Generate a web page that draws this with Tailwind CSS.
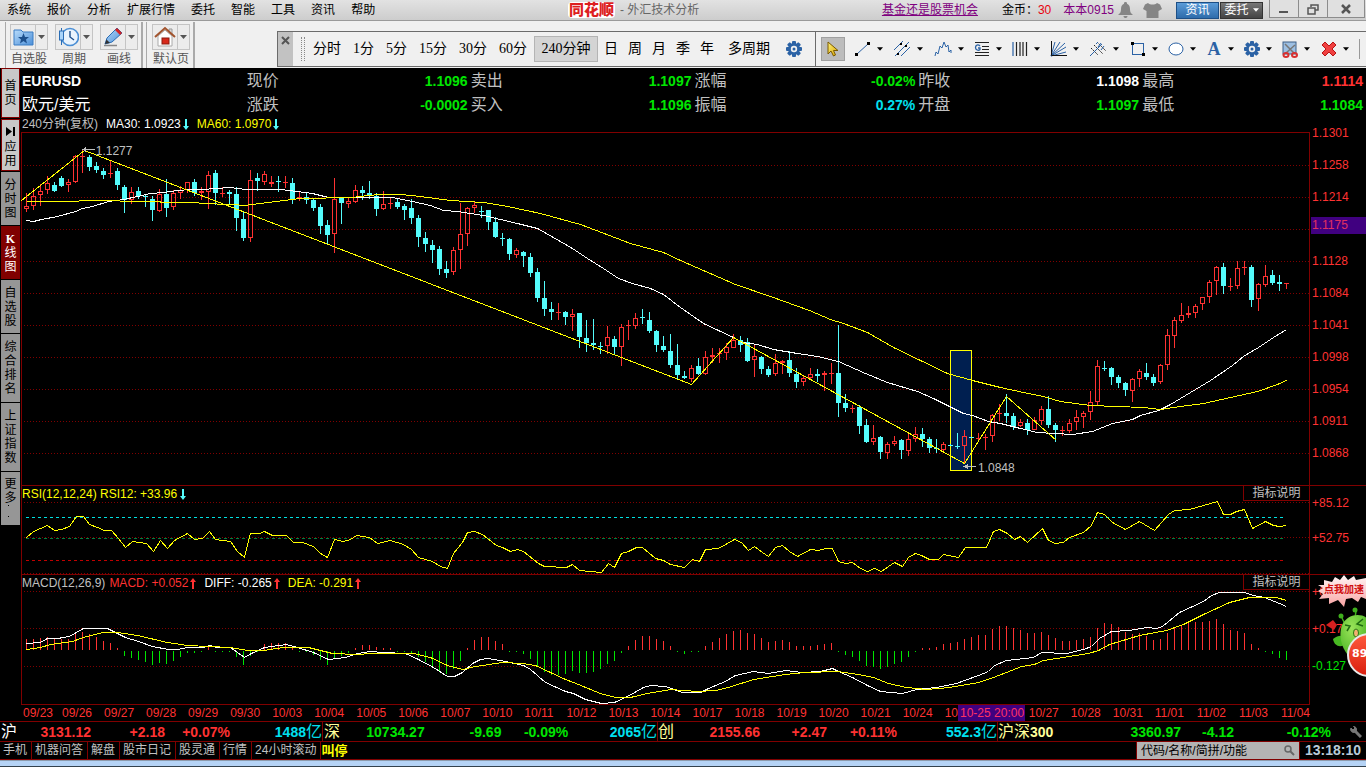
<!DOCTYPE html>
<html lang="zh-CN">
<head>
<meta charset="utf-8">
<title>同花顺 - 外汇技术分析</title>
<script src="https://cdn.jsdelivr.net/npm/@tailwindcss/browser@4"></script>
</head>
<body class="bg-black font-['Liberation_Sans','Noto_Sans_CJK_SC',sans-serif] text-xs">
<svg class="absolute h-0 w-0">
  <defs>
    <linearGradient id="blueFill" x1="0" y1="0" x2="1" y2="1"><stop offset="0" stop-color="#b9dcfb"/><stop offset="1" stop-color="#4b8fd8"/></linearGradient>
    <linearGradient id="gold" x1="0" y1="0" x2="1" y2="1"><stop offset="0" stop-color="#fff27a"/><stop offset="1" stop-color="#d9a400"/></linearGradient>
    <linearGradient id="pink" x1="0" y1="0" x2="0" y2="1"><stop offset="0" stop-color="#fff6f6"/><stop offset="1" stop-color="#f9a3a3"/></linearGradient>
    <radialGradient id="alien" cx=".4" cy=".3" r=".8"><stop offset="0" stop-color="#9be45a"/><stop offset="1" stop-color="#3fae1c"/></radialGradient>
    <linearGradient id="ball" x1="0" y1="0" x2="0" y2="1"><stop offset="0" stop-color="#ff5a3c"/><stop offset="1" stop-color="#d81e0e"/></linearGradient>
    <symbol id="caret" viewBox="0 0 7 4"><path d="M0 0H7L3.500 4Z" fill="currentColor"/></symbol>
    <symbol id="gear" viewBox="0 0 16 16"><g fill="#2b62a5"><rect x="6" y="0" width="4" height="16" rx="1"/><rect x="6" y="0" width="4" height="16" rx="1" transform="rotate(45 8 8)"/><rect x="6" y="0" width="4" height="16" rx="1" transform="rotate(90 8 8)"/><rect x="6" y="0" width="4" height="16" rx="1" transform="rotate(135 8 8)"/><circle cx="8" cy="8" r="6"/></g><circle cx="8" cy="8" r="3.200" fill="#f0f0f0"/><circle cx="8" cy="8" r="1.500" fill="#2b62a5"/></symbol>
    <symbol id="down" viewBox="0 0 6 11"><path d="M2 0H4V7H6L3 11L0 7H2Z" fill="#54fcfc"/></symbol>
    <symbol id="up" viewBox="0 0 6 11"><path d="M2 11H4V4H6L3 0L0 4H2Z" fill="#ff3232"/></symbol>
  </defs>
</svg>

<div class="flex min-h-screen flex-col overflow-hidden">
  <header class="flex h-[21px] items-center border-b border-[#9a9a9a] bg-linear-to-b from-[#e2e2e2] to-[#cdcdcd] text-black">
    <nav class="flex flex-1 gap-4 pl-[7px] whitespace-nowrap">
      <button>系统</button><button>报价</button><button>分析</button><button>扩展行情</button><button>委托</button><button>智能</button><button>工具</button><button>资讯</button><button>帮助</button>
    </nav>
    <h1 class="flex w-[314px] items-center gap-1 whitespace-nowrap text-[#666]">
      <span class="rounded-sm bg-white px-px text-[15px] leading-4 font-black text-[#dd1f1f]">同花顺</span><span class="ml-px">- 外汇技术分析</span>
    </h1>
    <div class="flex h-full items-center whitespace-nowrap">
      <a href="#" class="text-[#800080] underline">基金还是股票机会</a>
      <span class="ml-6">金币：</span><span class="text-red-600">30</span>
      <a href="#" class="ml-3 text-[#800080]">本本0915</a>
      <button class="ml-1" aria-label="提醒"><svg class="h-4 w-[15px]" viewBox="0 0 15 16" fill="#858585"><path d="M7.500 0a1.500 1.500 0 0 1 1.500 1.700C11.500 2.500 12 5 12 7.500C12 10 13 11.500 15 13H0C2 11.500 3 10 3 7.500C3 5 3.500 2.500 6 1.700A1.500 1.500 0 0 1 7.500 0ZM5.500 14h4c0 2.700-4 2.700-4 0Z"/></svg></button>
      <button class="ml-2.5" aria-label="换肤"><svg class="h-[15px] w-[19px]" viewBox="0 0 19 15" fill="#858585"><path d="M5 0C7 2 12 2 14 0L17 1.500L19 6L15.500 8V15H3.500V8L0 6L2 1.500Z"/></svg></button>
      <button class="ml-3.5 h-[17px] w-[43px] border border-[#1d4f86] bg-linear-to-b from-[#5a9bd8] to-[#2e6cab] leading-[15px] text-white">资讯</button>
      <button class="ml-px flex h-[17px] w-[43px] items-center justify-center gap-1 border border-[#333] bg-linear-to-b from-[#777] to-[#444] leading-[15px] text-white">委托<svg class="h-1 w-[6px]"><use href="#caret"/></svg></button>
      <div class="mr-px ml-1.5 flex h-[18px] self-start border border-t-0 border-[#8c8c8c] bg-[#e0e0e0] text-[#555]">
        <button class="w-[29px] border-r border-[#8c8c8c]" aria-label="最小化"><svg class="mx-auto h-3 w-[10px]"><rect y="8" width="9" height="2" fill="currentColor"/></svg></button>
        <button class="w-[29px] border-r border-[#8c8c8c]" aria-label="还原"><svg class="mx-auto h-3 w-3" viewBox="0 0 12 12" fill="none" stroke="currentColor" stroke-width="1.500"><path d="M4 4V2H11V7H8M1 5H8V11H1Z"/></svg></button>
        <button class="w-[36px]" aria-label="关闭"><svg class="mx-auto h-[10px] w-[10px]" viewBox="0 0 10 10" stroke="currentColor" stroke-width="2.500"><path d="M1 1L9 9M9 1L1 9"/></svg></button>
      </div>
    </div>
  </header>

  <div class="flex h-[47px] bg-[#f0f0f0] text-[#555]">
    <div class="flex shrink-0 pt-px">
      <div class="flex gap-[7px] border-r-2 border-[#aaa] pr-[3px]">
        <div class="ml-1 w-[2px] border-r border-[#aaa]"></div>
        <div class="-ml-[3px] text-center">
          <div class="mt-[2px] mb-px flex h-[26px] w-[38px] border border-[#c4c4c4] bg-[#ececec]">
            <button class="w-[25px] border-r border-[#c4c4c4] pl-0.5" aria-label="自选股"><svg class="h-5 w-[21px]" viewBox="0 0 21 20"><path d="M1 3H8L10 5H20V18H1Z" fill="url(#blueFill)" stroke="#3b7cc4"/><path d="M10.500 6L12 10H16L13 12.500L14 16.500L10.500 14L7 16.500L8 12.500L5 10H9Z" fill="#1c4f8c"/></svg></button>
            <button class="flex flex-1 items-center justify-center" aria-label="更多自选"><svg class="h-1 w-[7px]"><use href="#caret"/></svg></button>
          </div>自选股
        </div>
        <div class="text-center">
          <div class="mt-[2px] mb-px flex h-[26px] w-[38px] border border-[#c4c4c4] bg-[#ececec]">
            <button class="w-[25px] border-r border-[#c4c4c4] pl-0.5" aria-label="周期"><svg class="h-5 w-[21px]" viewBox="0 0 21 20"><circle cx="12" cy="10" r="8.500" fill="#e9f3fd" stroke="#4a8ed4" stroke-width="1.600"/><path d="M12 4V10L16 13" fill="none" stroke="#1c4f8c" stroke-width="1.400"/><path d="M3.500 1V18" stroke="#2a6db5"/><rect x="1.500" y="4" width="4" height="9" fill="#a9d4fa" stroke="#2a6db5"/></svg></button>
            <button class="flex flex-1 items-center justify-center" aria-label="选择周期"><svg class="h-1 w-[7px]"><use href="#caret"/></svg></button>
          </div>周期
        </div>
        <div class="text-center">
          <div class="mt-[2px] mb-px flex h-[26px] w-[38px] border border-[#c4c4c4] bg-[#ececec]">
            <button class="w-[25px] border-r border-[#c4c4c4] pl-0.5" aria-label="画线"><svg class="h-5 w-[21px]" viewBox="0 0 21 20"><path d="M1 18.500H14" stroke="#888" stroke-width="1.500"/><path d="M2 17L4 11L14 1L19 6L9 15Z" fill="url(#blueFill)" stroke="#2a6db5"/><path d="M14 1L19 6L17 8L12 3Z" fill="#d42222"/><path d="M2 17L3.500 12.500L7 16Z" fill="#333"/></svg></button>
            <button class="flex flex-1 items-center justify-center" aria-label="画线工具"><svg class="h-1 w-[7px]"><use href="#caret"/></svg></button>
          </div>画线
        </div>
      </div>
      <div class="flex border-r-2 border-[#aaa] pr-[3px]">
        <div class="mr-[5px] w-1 border-r border-[#aaa]"></div>
        <div class="text-center">
          <div class="mt-[2px] mb-px flex h-[26px] w-[38px] border border-[#c4c4c4] bg-[#ececec]">
            <button class="w-[25px] border-r border-[#c4c4c4] pl-px" aria-label="默认页"><svg class="h-[22px] w-[22px]" viewBox="0 0 22 22"><path d="M15 3H18V8H15Z" fill="#ddd" stroke="#999"/><path d="M4 10L11 4L18 10V20H4Z" fill="#fff" stroke="#aaa"/><path d="M1 11L11 2L21 11" fill="none" stroke="#a2542e" stroke-width="2"/><rect x="8" y="12" width="7" height="6" fill="#d8281a" stroke="#8a1c10"/></svg></button>
            <button class="flex flex-1 items-center justify-center" aria-label="选择默认页"><svg class="h-1 w-[7px]"><use href="#caret"/></svg></button>
          </div>默认页
        </div>
      </div>
    </div>
    <div class="mt-[10px] mb-px ml-[82px] flex min-w-0 flex-1 border border-r-0 border-[#6b6b6b] text-sm whitespace-nowrap text-black">
      <button class="flex w-[15px] shrink-0 justify-center bg-[#c2c2c2] pt-1" aria-label="关闭工具栏"><svg class="h-[9px] w-[9px]" viewBox="0 0 9 9" stroke="#555" stroke-width="2"><path d="M1 1L8 8M8 1L1 8"/></svg></button>
      <div class="my-[5px] ml-2 w-[4px] shrink-0 border-x border-dotted border-[#888]"></div>
      <div class="flex w-[510px] shrink-0 items-center pl-2 font-['Liberation_Serif','Noto_Sans_CJK_SC',serif]">
        <div class="flex gap-3"><button>分时</button><button>1分</button><button>5分</button><button>15分</button><button>30分</button><button>60分</button></div>
        <button class="mr-1.5 ml-[7px] h-[26px] w-16 border border-[#b4b4b4] bg-[#d4d4d4]">240分钟</button>
        <div class="flex gap-2.5"><button>日</button><button>周</button><button>月</button><button>季</button><button>年</button></div>
        <button class="ml-3.5">多周期</button>
        <button class="ml-4" aria-label="周期设置"><svg class="h-4 w-4"><use href="#gear"/></svg></button>
      </div>
      <div class="flex flex-1 items-center justify-between border-l border-[#6b6b6b] pr-1.5 pl-[5px]">
        <button class="flex h-6 w-6 items-center justify-center border border-[#a0a0a0] bg-[#bcbcbc]" aria-label="选择"><svg class="h-4 w-3" viewBox="0 0 12 16"><path d="M1 1V13L4 10L6.500 15L8.500 14L6.500 9.500H11Z" fill="url(#gold)" stroke="#7a5a00"/></svg></button>
        <button class="flex items-center gap-1.5" aria-label="线段"><svg class="h-4 w-4" viewBox="0 0 16 16"><path d="M2 13L13 3" stroke="#2b62a5"/><path d="M0 12H3V15H0ZM12 1H15V4H12Z"/></svg><svg class="h-1 w-[6px]"><use href="#caret"/></svg></button>
        <button class="flex items-center gap-1.5" aria-label="平行线"><svg class="h-4 w-[18px]" viewBox="0 0 18 16" stroke="#2b62a5"><path d="M1 9L10 0M2 15L16 1M8 15L17 6"/><path d="M4 12h2v2h-2zM7 2h2v2h-2zM12 4h2v2h-2z" fill="#000" stroke="none"/></svg><svg class="h-1 w-[6px]"><use href="#caret"/></svg></button>
        <button class="flex items-center gap-1.5" aria-label="波浪线"><svg class="h-4 w-[18px]" viewBox="0 0 18 16" fill="none" stroke="#2b62a5"><path d="M1 15L2 11L4 13L6 5L8 7L10 1L12 6L14 4L15 11L17 9V12"/></svg><svg class="h-1 w-[6px]"><use href="#caret"/></svg></button>
        <button class="flex items-center gap-1.5" aria-label="黄金分割"><svg class="h-4 w-4" viewBox="0 0 16 16" stroke="#222"><path d="M1 1.500H15M8 5.500H15M8 8.500H15M1 11.500H15M1 14.500H15"/><path d="M6 5C4 3 1.500 4 1.500 6.500S4.500 10 6 8.500V7H4" fill="none" stroke="#2b62a5" stroke-width="1.300"/></svg><svg class="h-1 w-[6px]"><use href="#caret"/></svg></button>
        <button class="flex items-center gap-1.5" aria-label="周期线"><svg class="h-4 w-4" viewBox="0 0 16 16" stroke="#222" stroke-width="1.200"><path d="M1 1V15" stroke="#2b62a5"/><path d="M4.500 1V15M8 1V15M11 1V15M14.500 1V15"/></svg><svg class="h-1 w-[6px]"><use href="#caret"/></svg></button>
        <button class="flex items-center gap-1.5" aria-label="扇形线"><svg class="h-4 w-[17px]" viewBox="0 0 17 16" fill="none" stroke="#2b62a5"><path d="M1 15L5 1M1 15L10 1M1 15L15 2M1 15L16 6M1 15L16 11"/><path d="M1.500 0V14.500H17" stroke="#111"/></svg><svg class="h-1 w-[6px]"><use href="#caret"/></svg></button>
        <button class="flex items-center gap-1.5" aria-label="回归通道"><svg class="h-4 w-[18px]" viewBox="0 0 18 16" fill="none" stroke="#222"><path d="M5 4L14 13M8 1L17 10M2 7L9 14" stroke-dasharray="2 1"/><path d="M1 15L13 3M7 3L9 1M9 6L12 2M12 9L15 5" stroke="#2b62a5"/></svg><svg class="h-1 w-[6px]"><use href="#caret"/></svg></button>
        <button class="flex items-center gap-1.5" aria-label="矩形"><svg class="h-4 w-4" viewBox="0 0 16 16"><rect x="2.500" y="2.500" width="11" height="11" fill="none" stroke="#2b62a5"/><path d="M1 1H4V4H1ZM12 12H15V15H12Z"/></svg><svg class="h-1 w-[6px]"><use href="#caret"/></svg></button>
        <button class="flex items-center gap-1.5" aria-label="椭圆"><svg class="h-4 w-4" viewBox="0 0 16 16"><ellipse cx="8" cy="8" rx="7" ry="6" fill="#fff" stroke="#2b62a5"/></svg><svg class="h-1 w-[6px]"><use href="#caret"/></svg></button>
        <button class="flex items-center gap-1.5" aria-label="文字"><span class="w-4 font-['Liberation_Serif',serif] text-lg font-bold text-[#2b62a5]">A</span><svg class="h-1 w-[6px]"><use href="#caret"/></svg></button>
        <button class="flex items-center gap-1.5" aria-label="设置"><svg class="h-4 w-4"><use href="#gear"/></svg><svg class="h-1 w-[6px]"><use href="#caret"/></svg></button>
        <button class="flex items-center gap-1.5" aria-label="截图"><svg class="h-[17px] w-4" viewBox="0 0 16 17"><rect x="1" y="1" width="13" height="12" fill="#9dbfe2" stroke="#3c5f86"/><path d="M3 3L12 12M13 4L4 12" stroke="#777" stroke-width="1.500"/><g fill="none" stroke="#d83030" stroke-width="2"><ellipse cx="4" cy="14" rx="2.500" ry="2"/><ellipse cx="12.500" cy="14" rx="2.500" ry="2"/></g></svg><svg class="h-1 w-[6px]"><use href="#caret"/></svg></button>
        <button class="flex items-center gap-1.5" aria-label="删除"><svg class="h-4 w-4" viewBox="0 0 16 16"><path d="M4 1L8 5L12 1L15 4L11 8L15 12L12 15L8 11L4 15L1 12L5 8L1 4Z" fill="#f04040" stroke="#b81414"/></svg><svg class="h-1 w-[6px]"><use href="#caret"/></svg></button>
        <div class="h-5 border-r border-[#999]"></div>
      </div>
    </div>
  </div>

  <main class="relative flex flex-1">
    <nav class="flex w-[21px] shrink-0 flex-col gap-px leading-[14px] text-black [&>button]:mr-px [&>button]:ml-px [&>button]:flex [&>button]:w-[19px] [&>button]:flex-col [&>button]:items-center [&>button]:justify-center">
      <button class="h-[50px] border border-[#800000] bg-[#c8c8c8]"><span class="w-3">首页</span></button>
      <button class="h-[52px] border border-[#800000] bg-[#c8c8c8]"><svg class="my-1 h-[9px] w-[9px]" viewBox="0 0 9 9"><path d="M0 0H2V9H0Z" fill="none"/><path d="M0 0L6 4.500L0 9ZM7 0H9V9H7Z"/></svg><span class="w-3">应用</span></button>
      <button class="h-[53px] bg-[#969696]"><span class="w-3">分时图</span></button>
      <button class="h-[53px] bg-[#800000] text-white"><span class="w-3"><b class="font-['Liberation_Serif',serif]">K</b><br>线图</span></button>
      <button class="h-[53px] bg-[#969696]"><span class="w-3">自选股</span></button>
      <button class="h-[68px] bg-[#969696]"><span class="w-3">综合排名</span></button>
      <button class="h-[68px] bg-[#969696]"><span class="w-3">上证指数</span></button>
      <button class="h-[53px] bg-[#969696]"><span class="w-3">更多</span><svg class="mr-1 h-[15px] w-px"><path d="M0 0H1V1H0ZM0 11H1V12H0Z"/></svg></button>
    </nav>

    <div class="flex min-w-0 flex-1 flex-col">
      <dl class="grid grid-cols-[225fr_224fr_224fr_224fr_224fr_224fr] pt-px pl-px text-base leading-6 text-[#c0c0c0] [&_dd]:text-sm [&_dd]:leading-6 [&_dd]:font-bold [&>div]:flex [&>div]:justify-between [&>div]:pr-[3px]">
        <div><dt class="text-sm leading-6 font-bold text-white">EURUSD</dt></div>
        <div><dt>现价</dt><dd class="text-[#00e600]">1.1096</dd></div>
        <div><dt>卖出</dt><dd class="text-[#00e600]">1.1097</dd></div>
        <div><dt>涨幅</dt><dd class="text-[#00e600]">-0.02%</dd></div>
        <div><dt>昨收</dt><dd class="text-white">1.1098</dd></div>
        <div><dt>最高</dt><dd class="text-[#ff3232]">1.1114</dd></div>
        <div><dt class="text-white">欧元/美元</dt></div>
        <div><dt>涨跌</dt><dd class="text-[#00e600]">-0.0002</dd></div>
        <div><dt>买入</dt><dd class="text-[#00e600]">1.1096</dd></div>
        <div><dt>振幅</dt><dd class="text-[#00e0f0]">0.27%</dd></div>
        <div><dt>开盘</dt><dd class="text-[#00e600]">1.1097</dd></div>
        <div><dt>最低</dt><dd class="text-[#00e600]">1.1084</dd></div>
      </dl>

      <div class="grid flex-1 grid-cols-[minmax(0,1fr)_56px] grid-rows-[15px_minmax(0,353fr)_minmax(0,89fr)_minmax(0,131fr)_16px]">
        <div class="flex items-center gap-2 pl-px leading-[15px] whitespace-nowrap text-[#c0c0c0]">
          <span>240分钟(复权)</span>
          <span class="flex items-center gap-0.5 text-white">MA30: 1.0923<svg class="h-[11px] w-[6px]"><use href="#down"/></svg></span>
          <span class="flex items-center gap-0.5 text-[#ffff00]">MA60: 1.0970<svg class="h-[11px] w-[6px]"><use href="#down"/></svg></span>
        </div>
        <div class="col-start-2 row-span-2 row-start-1 flex flex-col pl-[2px] text-[#ff3232] [&>span]:flex [&>span]:flex-[32] [&>span]:items-center">
          <span>1.1301</span><span>1.1258</span><span>1.1214</span>
          <div class="-ml-px flex flex-[32] items-start text-[#e03060]"><div class="mt-1 h-[17px] flex-1 bg-[#400080] pl-px leading-[17px]">1.1175</div></div>
          <span>1.1128</span><span>1.1084</span><span>1.1041</span><span>1.0998</span><span>1.0954</span><span>1.0911</span><span>1.0868</span>
          <div class="flex-[16]"></div>
        </div>

        <section class="relative col-start-1 row-start-2 border-r border-[#800000]">
          <svg id="kline" class="absolute inset-0 h-full w-full" viewBox="21 132 1288 353" preserveAspectRatio="none" shape-rendering="crispEdges"></svg>
          <span class="absolute top-[3%] left-[5.8%] text-[#c0c0c0]">1.1277</span>
          <span class="absolute top-[93%] left-[74.3%] text-[#c0c0c0]">1.0848</span>
        </section>

        <section class="relative col-start-1 row-start-3 border-r border-[#800000]">
          <svg id="rsi" class="absolute inset-0 h-full w-full" viewBox="21 485 1288 89" preserveAspectRatio="none" shape-rendering="crispEdges"></svg>
          <div class="relative flex justify-between pl-px leading-[17px]">
            <span class="flex items-center gap-0.5 pt-px text-[#ffff00]">RSI(12,12,24) RSI12: +33.96<svg class="ml-px h-[11px] w-[6px]"><use href="#down"/></svg></span>
            <button class="mt-px h-[15px] w-[66px] border-b border-l border-[#800000] bg-black leading-[15px] text-[#c0c0c0]">指标说明</button>
          </div>
        </section>
        <div class="col-start-2 row-start-3 flex flex-col border-t border-[#800000] pl-[2px] text-[#ff3232] [&>span]:flex [&>span]:items-center">
          <span class="flex-[35]">+85.12</span><span class="flex-[35]">+52.75</span><div class="flex-[19]"></div>
        </div>

        <section class="relative col-start-1 row-start-4 border-r border-[#800000]">
          <svg id="macd" class="absolute inset-0 h-full w-full" viewBox="21 574 1288 131" preserveAspectRatio="none" shape-rendering="crispEdges"></svg>
          <div class="relative flex justify-between pl-px leading-[17px]">
            <div class="flex items-center pt-px text-[#c0c0c0]">MACD(12,26,9)
              <span class="ml-1 flex items-center gap-0.5 text-[#ff3232]">MACD: +0.052<svg class="h-[11px] w-[6px]"><use href="#up"/></svg></span>
              <span class="ml-2 flex items-center gap-0.5 text-white">DIFF: -0.265<svg class="h-[11px] w-[6px]"><use href="#up"/></svg></span>
              <span class="ml-2 flex items-center gap-0.5 text-[#ffff00]">DEA: -0.291<svg class="h-[11px] w-[6px]"><use href="#up"/></svg></span>
            </div>
            <button class="mt-px h-[15px] w-[66px] border-b border-l border-[#800000] bg-black leading-[15px] text-[#c0c0c0]">指标说明</button>
          </div>
        </section>
        <div class="relative col-start-2 row-start-4 flex flex-col border-t border-[#800000] pl-[2px] text-[#ff3232] [&>span]:flex [&>span]:items-center">
          <span class="flex-[35]">+0</span><span class="flex-[38]">+0.17</span><span class="flex-[38] text-[#00e600]">-0.127</span><div class="flex-[20]"></div>
          <svg class="absolute top-0 right-0 h-[106px] w-[48px]" viewBox="0 0 48 106">
            <path d="M0 10L6 10L6 5L14 7L17 2L22 5L26 0L30 5L36 1L38 5L48 3V24L43 22L40 27L34 23L28 24L26 32L20 25L11 29L11 23L1 24L5 19L0 16L5 13Z" fill="url(#pink)"/>
            <text x="6" y="18" font-size="10" font-weight="bold" fill="#d01010" font-family="Noto Sans CJK SC, sans-serif">点我加速</text>
            <path d="M24 43L27 49M38 36L37 43" stroke="#3fae1c" stroke-width="1.500"/><circle cx="23" cy="41" r="2.500" fill="#3fae1c"/><circle cx="37" cy="35" r="2.500" fill="#3fae1c"/>
            <path d="M8 50L15 45L19 50L16 55Z" fill="#d82020"/>
            <path d="M15 64C20 60 24 60 27 62L26 70C21 73 16 70 15 64Z" fill="#48b822"/>
            <path d="M24 50C30 38 44 38 50 44V84H34C24 76 20 62 24 50Z" fill="url(#alien)"/>
            <path d="M27 50L32 51L29 56M45 44L39 49L45 51" fill="none" stroke="#1f6b10" stroke-width="1.500"/><ellipse cx="38" cy="58" rx="2.500" ry="4" fill="#f3b070" stroke="#267a14"/>
            <circle cx="51" cy="80" r="21" fill="url(#ball)" stroke="#e8e8e8" stroke-width="2"/>
            <text x="34" y="82" font-size="11" font-weight="bold" fill="#fff" font-family="DejaVu Sans, sans-serif">89</text>
          </svg>
        </div>

        <div class="col-span-2 col-start-1 row-start-5 flex pr-[43px] pl-[2px] leading-4 text-[#ff3232] [&>span]:min-w-0 [&>span]:flex-1 [&>span]:whitespace-nowrap">
          <div class="w-[39px] shrink-0">09/23</div>
          <span>09/26</span><span>09/27</span><span>09/28</span><span>09/29</span><span>09/30</span><span>10/03</span><span>10/04</span><span>10/05</span><span>10/06</span><span>10/07</span><span>10/10</span><span>10/11</span><span>10/12</span><span>10/13</span><span>10/14</span><span>10/17</span><span>10/18</span><span>10/19</span><span>10/20</span><span>10/21</span><span>10/24</span>
          <span class="flex">10<b class="h-4 w-[67px] shrink-0 bg-[#400080] pl-0.5 font-normal text-[#ff3264]">10-25 20:00</b></span><span></span>
          <span>10/27</span><span>10/28</span><span>10/31</span><span>11/01</span><span>11/02</span><span>11/03</span><span>11/04</span>
        </div>
      </div>
    </div>
  </main>

  <div class="grid h-[20px] grid-cols-[323fr_335fr_340fr_368fr] border-t border-[#800000] text-sm leading-[20px] font-bold whitespace-nowrap [&_i]:text-base [&_i]:leading-[18px] [&_i]:font-normal [&_i]:not-italic [&_span]:flex [&_span]:items-center [&_span]:justify-end [&>div]:grid">
    <div class="grid-cols-[91fr_74fr_65fr_92fr] border-r border-[#800000] text-[#ff3232]"><span><i class="mr-auto pl-px text-white">沪</i>3131.12</span><span>+2.18</span><span>+0.07%</span><span class="text-[#00e0f0]">1488<i>亿</i></span></div>
    <div class="grid-cols-[102fr_77fr_67fr_89fr] border-r border-[#800000] text-[#00e600]"><span><i class="mr-auto pl-px text-[#ffff99]">深</i>10734.27</span><span>-9.69</span><span>-0.09%</span><span class="text-[#00e0f0]">2065<i>亿</i></span></div>
    <div class="grid-cols-[102fr_67fr_70fr_100fr] border-r border-[#800000] text-[#ff3232]"><span><i class="mr-auto text-[#ffff99]">创</i>2155.66</span><span>+2.47</span><span>+0.11%</span><span class="text-[#00e0f0]">552.3<i>亿</i></span></div>
    <div class="grid-cols-[183fr_53fr_97fr_35fr] text-[#00e600]"><span><i class="text-[#ffff99]">沪深</i><b class="mr-auto text-[#ffff99]">300</b>3360.97</span><span>-4.12</span><span>-0.12%</span><span class="pr-1"><button aria-label="设置"><svg class="h-3 w-3" viewBox="0 0 12 12" fill="none" stroke="#777"><path d="M5 5L11 11" stroke-width="3"/><path d="M1 2L3 4L5 2L3.500 .5A3 3 0 1 1 1 2" fill="#777"/></svg></button></span></div>
  </div>
  <footer class="flex h-[19px] items-stretch border-y border-[#800000] leading-[16px] whitespace-nowrap text-[#c0c0c0] [&>a]:border-r [&>a]:border-[#800000] [&>a]:pr-1 [&>a]:pl-[3px]">
    <a href="#">手机</a><a href="#">机器问答</a><a href="#">解盘</a><a href="#">股市日记</a><a href="#">股灵通</a><a href="#">行情</a><a href="#">24小时滚动</a>
    <strong class="text-[13px] leading-[17px] text-[#ffff00]">叫停</strong>
    <label class="ml-auto flex w-[163px] items-center border-l border-[#800000] bg-[#b4b4b4] pr-1 pl-1"><input class="min-w-0 flex-1 text-black placeholder:text-black placeholder:opacity-100" placeholder="代码/名称/简拼/功能" aria-label="搜索代码"><svg class="h-[11px] w-[11px]" viewBox="0 0 11 11" fill="none" stroke="#666" stroke-width="1.500"><circle cx="4" cy="4" r="3"/><path d="M6 6L10 10" stroke-width="2"/></svg></label>
    <time class="w-[67px] border-l border-[#800000] pl-[5px] text-sm leading-[17px] font-bold text-[#b8cad8]">13:18:10</time>
  </footer>
  <div class="h-[7px] border-t border-b border-t-[#8c9aac] border-b-[#33414c] bg-[#b5d3f5]"></div>
</div>

<script>
// Candles, seven pixels apart: direction, body top, body bottom, high, low
const candles = `r206,209,193,212 r196,206,188,210 r191,195,184,206 r183,190,176,194 c185,191,182,192 c178,186,176,187 r182,185,179,192 r156,182,155,183 r156,156,150,173 c157,167,155,171 c166,170,162,173 c171,175,168,179 r173,173,161,178 c171,185,168,190 c187,200,185,213 r192,200,187,204 c191,196,187,199 c196,196,194,207 c199,210,196,221 r194,211,189,212 c194,208,179,217 r193,207,190,210 r190,193,186,199 r182,190,182,193 c182,193,179,196 r191,193,187,200 r175,192,171,209 c173,193,170,205 r193,193,187,197 c192,194,190,204 c194,218,187,231 c219,238,212,241 r180,238,170,242 c178,181,173,191 r174,182,171,185 r182,184,176,187 c181,181,176,192 r182,182,176,188 c183,199,178,204 r197,197,192,201 c197,200,193,204 c200,208,198,211 c207,226,204,234 c225,235,220,245 r199,234,178,253 c197,203,197,224 r201,204,198,208 r190,202,185,203 c190,193,186,200 c193,196,181,199 c196,209,193,216 r204,209,191,210 r203,203,198,209 c202,207,199,209 c206,210,204,220 c208,218,199,224 c218,237,215,247 c238,244,232,252 c245,250,240,263 c249,269,246,275 c269,273,261,278 r250,272,247,275 r234,250,203,269 r208,234,207,246 r205,208,202,213 c211,211,206,218 c210,222,210,230 c222,237,217,238 c238,238,233,246 c239,254,238,260 r250,255,248,258 c252,256,251,267 c257,273,253,277 c272,298,268,302 c298,309,281,316 c309,312,302,320 r312,312,303,320 c312,317,311,325 r314,317,309,331 c313,337,313,348 c338,343,320,352 c343,345,319,350 c346,346,342,354 r337,346,326,354 c339,347,336,355 r327,347,324,366 r325,325,320,340 r318,326,313,329 c317,317,309,324 c320,331,312,333 c331,345,330,352 c346,350,336,352 c351,365,334,368 c365,375,344,380 c376,378,371,379 r368,379,365,382 c366,374,358,375 r357,374,351,375 r355,357,348,363 r353,353,348,363 r347,353,343,360 r340,348,334,348 c340,345,336,352 c342,361,338,362 r356,360,344,377 c357,369,356,374 c369,375,366,377 r363,374,354,376 r361,363,360,374 c360,373,351,377 c374,382,368,388 r378,382,375,386 r374,378,368,380 c374,376,369,382 r373,375,371,391 r373,373,363,384 c373,403,325,417 c403,408,394,412 r408,408,405,413 c407,426,405,434 c425,442,419,443 r438,442,425,445 c437,452,436,459 r444,453,442,459 r441,444,436,446 c440,450,439,459 r439,451,433,456 r434,439,427,442 c434,439,428,447 c439,448,437,453 c448,448,439,453 r444,450,442,452 c445,445,444,446 c446,446,433,449 r436,446,430,463 c437,437,437,438 r438,438,433,440 r437,437,434,450 r415,436,414,442 r413,413,404,421 c413,416,394,423 c416,427,413,430 r422,426,419,427 c423,430,419,435 r420,430,417,430 r409,421,406,425 c409,425,396,428 c425,430,423,442 r430,430,426,436 r423,431,419,433 r417,422,410,430 r413,417,411,428 r402,412,391,420 r366,402,360,406 c368,368,361,371 c368,377,367,385 c377,383,375,388 c383,390,382,396 r379,391,378,402 r371,379,369,387 c373,377,363,380 c377,383,374,386 r365,382,364,384 r335,365,329,370 r320,336,317,348 r315,321,303,323 r313,315,306,318 r306,313,304,318 r297,304,297,310 r282,297,280,303 r267,281,266,295 c267,286,263,294 r286,286,278,291 r268,286,261,289 r267,267,261,275 c267,300,265,307 r284,299,283,311 r276,285,265,287 c275,283,270,285 c282,284,275,291 r283,283,283,289`.split(' ');

const ma30 = "26,220 33,221 41,219 57,216 75,211 82,208 92,206 108,201 123,199 137,196 150,193 163,192 177,190 190,189 202,189 230,187 245,189 260,189 280,189 297,191 312,193 328,197 350,197 392,197 412,201 430,205 443,210 457,211 483,215 500,219 517,223 537,228 553,237 572,248 587,258 603,268 618,278 632,283 650,288 663,294 680,307 703,323 733,337 742,342 757,344 773,349 797,353 817,356 838,361 865,373 887,382 917,391 933,398 963,413 972,415 988,421 1000,423 1020,428 1037,432 1072,434 1092,431 1112,423 1132,419 1140,415 1158,410 1170,404 1190,392 1210,380 1232,365 1243,356 1258,347 1273,337 1286,329";
const ma60 = "26,201 77,201 80,200 157,201 163,202 197,202 200,203 233,204 243,205 260,203 283,200 300,198 352,197 367,195 380,194 400,194 420,196 450,200 483,202 507,206 540,213 580,224 630,243 663,252 680,260 735,284 770,296 809,310 830,319 843,323 867,332 893,347 920,360 947,373 972,380 1000,387 1023,392 1043,396 1060,401 1090,405 1143,407 1160,409 1180,406 1203,403 1230,397 1257,391 1277,384 1286,380";
const zigzag = "21,200 84,150 691,384 733,337 964,463 1006,396 1056,440";
const rsi = "26,537 33,531 40,528 47,525 54,530 61,529 69,526 76,516 83,516 89,524 97,527 104,530 111,530 118,538 125,547 132,541 146,543 153,551 160,540 167,548 174,540 187,533 194,539 202,538 209,531 215,539 230,541 237,551 244,557 250,533 259,533 264,531 272,535 286,535 293,542 302,542 313,546 320,553 327,557 334,539 343,541 350,539 356,535 369,537 377,543 390,540 403,544 411,549 418,557 432,561 440,566 447,568 453,553 462,542 467,532 474,531 482,534 496,545 502,547 510,551 517,549 523,551 538,563 544,566 566,567 572,564 579,570 601,572 608,563 614,567 621,553 628,551 636,547 642,547 655,558 663,560 670,564 684,567 692,559 699,561 705,549 718,548 734,539 741,542 748,550 754,546 762,552 768,556 775,547 782,545 789,551 797,556 810,549 818,550 825,548 832,548 838,561 845,563 852,562 860,568 867,571 874,568 881,571 888,566 894,562 902,566 908,557 915,553 921,555 929,559 938,559 943,554 958,557 965,547 986,547 993,531 999,529 1007,533 1014,539 1020,536 1027,542 1042,528 1048,540 1055,543 1063,542 1069,537 1083,532 1091,525 1097,512 1104,514 1112,522 1125,529 1139,521 1154,530 1168,514 1174,510 1189,509 1217,501 1223,514 1230,514 1236,511 1244,509 1252,528 1265,521 1273,525 1279,526 1286,525";
const diff = "26,643 40,642 47,638 57,638 69,636 83,628 107,628 115,632 125,637 138,641 152,646 168,649 177,649 187,647 203,647 209,645 217,647 230,647 237,652 244,657 251,653 264,647 286,644 297,647 313,652 328,659 345,657 357,653 370,651 383,652 405,653 418,659 433,667 447,676 454,676 462,672 472,663 480,659 488,658 505,661 523,665 530,669 545,682 565,691 573,693 585,699 601,703 614,702 627,696 643,687 650,685 665,686 682,692 700,692 708,688 725,681 735,675 753,671 768,673 785,670 802,672 820,671 832,668 838,671 852,677 867,685 880,691 902,693 916,689 936,687 956,683 978,675 988,671 994,665 1006,660 1033,657 1041,652 1066,653 1083,649 1091,646 1099,638 1111,631 1129,630 1146,627 1156,628 1162,626 1179,612 1203,601 1211,595 1219,592 1231,592 1244,592 1253,595 1264,597 1279,603 1286,606";
const dea = "26,649 40,647 50,644 72,641 83,637 102,632 117,632 137,635 167,642 187,645 230,647 247,650 263,650 283,647 308,647 332,653 357,654 370,653 413,653 430,657 447,665 462,669 475,666 502,662 522,663 535,665 565,679 573,682 600,693 615,697 630,697 647,693 670,689 697,691 715,690 728,687 753,679 785,674 805,672 837,671 858,674 873,677 888,683 906,687 926,689 949,687 978,682 993,677 1006,672 1021,666 1034,664 1043,660 1088,653 1098,650 1109,644 1139,635 1166,630 1183,624 1203,614 1229,602 1249,597 1276,597 1286,600";
// Histogram ends; the zero line lies at 650
const hist = [639,639,638,637,639,639,639,634,632,634,637,641,643,648,656,658,660,662,665,663,664,661,657,653,653,652,647,651,651,652,657,665,656,652,644,643,643,643,647,651,652,655,660,665,658,656,653,648,645,645,647,648,648,651,651,653,657,662,666,671,674,669,661,648,640,637,637,641,644,651,652,654,659,666,672,675,675,674,671,673,673,672,669,664,661,653,646,640,636,636,639,641,646,651,654,652,652,646,642,638,634,631,630,633,634,638,642,641,640,642,646,646,646,645,644,643,651,655,657,661,666,667,669,667,664,662,657,652,648,648,647,644,643,642,639,637,635,635,629,626,626,628,630,633,633,632,635,638,641,641,640,639,637,628,623,624,627,632,634,633,636,640,639,633,628,625,623,622,622,621,619,624,630,631,633,644,648,651,654,658,660];

const RED = '#ff3232', CYAN = '#54fcfc', DARK = '#800000', YELLOW = '#ffff00';
const rect = (x, y, w, h, fill) => `<rect x="${x}" y="${y}" width="${w}" height="${h}" fill="${fill}"/>`;
const hline = (y, dash, color, x1 = 24, x2 = 1309) => `<path d="M${x1} ${y + .5}H${x2}" stroke="${color}" stroke-dasharray="${dash}"/>`;
const poly = (pts, color) => `<polyline transform="translate(.5 .5)" points="${pts}" fill="none" stroke="${color}"/>`;

let k = rect(21, 132, 1288, 1, DARK) + rect(21, 132, 1, 353, DARK);
for (let y = 165; y < 480; y += 32) k += hline(y, '1 2', DARK);
k += `<rect x="950.5" y="350.5" width="21" height="120" fill="#001f50" stroke="${YELLOW}"/>`;
candles.forEach((s, i) => {
  const x = 26 + 7 * i, [t, b, h, l] = s.slice(1).split(',').map(Number);
  if (s[0] === 'c') k += rect(x, h, 1, l - h, CYAN) + rect(x - 2, t, 5, Math.max(1, b - t), CYAN);
  else if (b - t < 3) k += rect(x, h, 1, l - h, RED) + rect(x - 2, t, 5, Math.max(1, b - t), RED);
  else k += rect(x, h, 1, t - h, RED) + rect(x, b, 1, l - b, RED) + `<rect x="${x - 1.5}" y="${t + .5}" width="4" height="${b - t - 1}" fill="none" stroke="${RED}"/>`;
});
k += poly(ma30, '#fff') + poly(ma60, YELLOW) + poly(zigzag, YELLOW);
k += `<path d="M83 149.500H95M964 466.500H976" stroke="#c0c0c0"/><path d="M82 149.500L86 147V152ZM963 466.500L968 464V469Z" fill="#c0c0c0"/>`;
document.getElementById('kline').innerHTML = k;

document.getElementById('rsi').innerHTML = rect(21, 485, 1288, 1, DARK) + rect(21, 485, 1, 89, DARK)
  + hline(502, '1 2', DARK) + hline(537, '1 2', DARK) + hline(573, '1 2', DARK)
  + hline(517, '3 3', '#00e0e0', 26, 1284) + hline(538, '3 3', '#008040', 26, 1284) + hline(560, '3 3', '#c00000', 26, 1284)
  + poly(rsi, YELLOW);

let m = rect(21, 574, 1288, 1, DARK) + rect(21, 574, 1, 131, DARK) + rect(21, 704, 1288, 1, DARK)
  + hline(591, '1 2', DARK) + hline(628, '1 2', DARK) + hline(666, '1 2', DARK);
hist.forEach((v, i) => { m += v <= 650 ? rect(26 + 7 * i, v, 1, 650 - v, RED) : rect(26 + 7 * i, 651, 1, Math.max(1, v - 651), '#00e600'); });
document.getElementById('macd').innerHTML = m + poly(diff, '#fff') + poly(dea, YELLOW);
</script>
</body>
</html>
